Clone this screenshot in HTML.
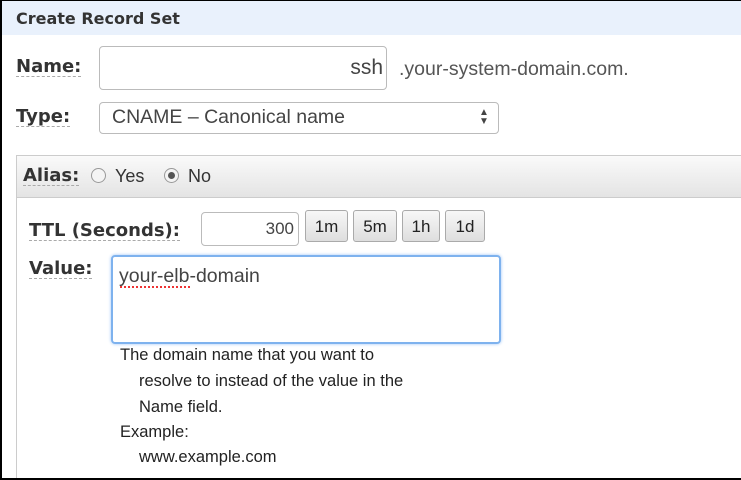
<!DOCTYPE html>
<html><head><style>
html,body{margin:0;width:741px;height:480px;overflow:hidden}
body{background:#fff;font-family:"Liberation Sans",sans-serif;position:relative}
.a{position:absolute}
.lbl{font-family:"DejaVu Sans",sans-serif;font-weight:bold;color:#333;font-size:16px;border-bottom:1px dashed #aaa;line-height:19px}
.btn{position:absolute;top:210px;height:32px;border:1px solid #aaa;border-radius:3px;background:linear-gradient(#f7f7f7,#dedede);font-size:17px;color:#222;text-align:center;line-height:31px;box-sizing:border-box}
.help{position:absolute;font-size:16.5px;color:#222}
</style></head><body>
<div class="a" style="left:16px;top:155px;width:730px;height:330px;border:1px solid #ccc;box-sizing:border-box"></div>
<div class="a" style="left:0;top:0;width:741px;height:1px;background:#000"></div>
<div class="a" style="left:0;top:0;width:2px;height:480px;background:#000"></div>
<div class="a" style="left:0;top:478px;width:741px;height:2px;background:#000;z-index:5"></div>
<div class="a" style="left:2px;top:1px;width:739px;height:34px;background:#e9f1fc"></div>
<div class="a" style="left:16px;top:9px;font-family:'DejaVu Sans',sans-serif;font-weight:bold;font-size:16px;color:#333">Create Record Set</div>

<div class="a lbl" style="left:16px;top:57px;font-size:18px">Name:</div>
<div class="a" style="left:99px;top:46px;width:288px;height:44px;border:1px solid #bbb;border-radius:4px;box-sizing:border-box"></div>
<div class="a" style="left:300px;width:83px;text-align:right;top:56px;font-size:21px;color:#444">ssh</div>
<div class="a" style="left:399px;top:58px;font-size:19.5px;color:#555">.your-system-domain.com.</div>

<div class="a lbl" style="left:16px;top:107px;font-size:18px">Type:</div>
<div class="a" style="left:99px;top:102px;width:400px;height:32px;border:1px solid #bbb;border-radius:4px;box-sizing:border-box"></div>
<div class="a" style="left:112px;top:106px;font-size:19.5px;color:#444">CNAME – Canonical name</div>
<div class="a" style="left:479px;top:108px;font-size:10px;line-height:9px;color:#444">▲<br>▼</div>

<div class="a" style="left:17px;top:156px;width:724px;height:41px;background:linear-gradient(#fafafa,#e4e4e4);border-bottom:1px solid #ccc"></div>
<div class="a lbl" style="left:23px;top:166px;font-size:18px">Alias:</div>
<div class="a" style="left:91px;top:168px;width:15px;height:15px;border:1px solid #999;border-radius:50%;box-sizing:border-box;background:#f4f4f4"></div>
<div class="a" style="left:115px;top:166px;font-size:18px;color:#333">Yes</div>
<div class="a" style="left:164px;top:168px;width:15px;height:15px;border:1px solid #999;border-radius:50%;box-sizing:border-box;background:#f4f4f4"></div>
<div class="a" style="left:168px;top:172px;width:7px;height:7px;border-radius:50%;background:#555"></div>
<div class="a" style="left:188px;top:166px;font-size:18px;color:#333">No</div>

<div class="a lbl" style="left:29px;top:221px;font-size:18px">TTL (Seconds):</div>
<div class="a" style="left:201px;top:212px;width:98px;height:34px;border:1px solid #bbb;border-radius:4px;box-sizing:border-box"></div>
<div class="a" style="left:220px;width:74px;text-align:right;top:219px;font-size:17px;color:#444">300</div>
<div class="btn" style="left:305px;width:43px">1m</div>
<div class="btn" style="left:353px;width:44px">5m</div>
<div class="btn" style="left:402px;width:38px">1h</div>
<div class="btn" style="left:445px;width:40px">1d</div>

<div class="a lbl" style="left:29px;top:259px;font-size:18px">Value:</div>
<div class="a" style="left:111px;top:255px;width:390px;height:89px;border:2px solid #7eb2ee;border-radius:4px;box-sizing:border-box;box-shadow:0 0 3px #9cc4f5"></div>
<div class="a" style="left:119px;top:265px;font-size:19.5px;color:#444">your-elb-domain</div>
<div class="a" style="left:120px;top:286px;width:70px;border-bottom:2px dotted #e33"></div>

<div class="help" style="left:120px;top:346px">The domain name that you want to</div>
<div class="help" style="left:139px;top:372px">resolve to instead of the value in the</div>
<div class="help" style="left:139px;top:398px">Name field.</div>
<div class="help" style="left:120px;top:423px">Example:</div>
<div class="help" style="left:139px;top:448px">www.example.com</div>
</body></html>
